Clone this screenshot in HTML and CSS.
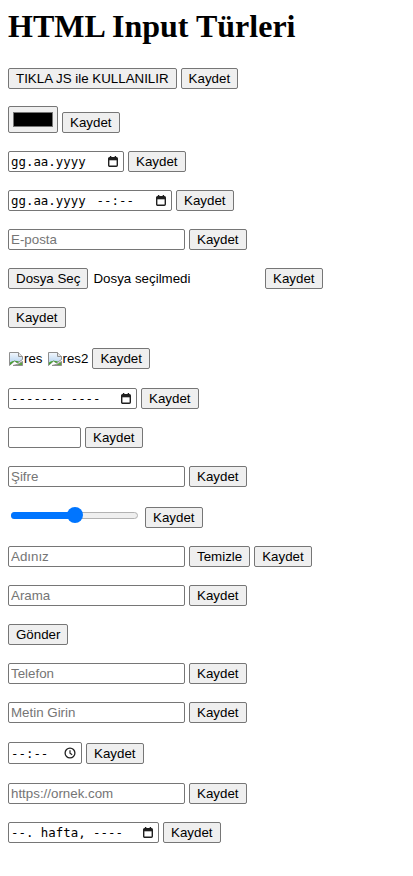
FILE: index.html
```html
<!DOCTYPE html>
<html lang="tr">
<head>
<meta charset="utf-8">
<title>HTML Input Türleri</title>
<link rel="stylesheet" href="styles.css">
</head>
<body class="page">
<h1 class="title">HTML Input Türleri</h1>
<form class="rows">
  <div class="row row-first">
    <button type="button" class="btn">TIKLA JS ile KULLANILIR</button>
    <button type="button" class="btn">Kaydet</button>
  </div>
  <div class="row row-color">
    <div class="color"><span class="swatch"></span></div>
    <button type="button" class="btn">Kaydet</button>
  </div>
  <div class="row">
    <div class="dt w-date"><span>gg.aa.yyyy</span>
      <svg class="cal" viewBox="0 0 10 11" width="10" height="11"><path d="M2.6 0v2.2M7.4 0v2.2" stroke="#202020" stroke-width="1.4"/><rect x="0.7" y="1.7" width="8.6" height="8.6" rx="1" fill="none" stroke="#202020" stroke-width="1.4"/><rect x="0.7" y="1.7" width="8.6" height="2.6" fill="#202020"/></svg>
    </div>
    <button type="button" class="btn">Kaydet</button>
  </div>
  <div class="row">
    <div class="dt w-datetime"><span>gg.aa.yyyy<span class="dt-time">--:--</span></span>
      <svg class="cal" viewBox="0 0 10 11" width="10" height="11"><path d="M2.6 0v2.2M7.4 0v2.2" stroke="#202020" stroke-width="1.4"/><rect x="0.7" y="1.7" width="8.6" height="8.6" rx="1" fill="none" stroke="#202020" stroke-width="1.4"/><rect x="0.7" y="1.7" width="8.6" height="2.6" fill="#202020"/></svg>
    </div>
    <button type="button" class="btn">Kaydet</button>
  </div>
  <div class="row">
    <input class="field" type="email" placeholder="E-posta">
    <button type="button" class="btn">Kaydet</button>
  </div>
  <div class="row">
    <div class="file"><button type="button" class="btn">Dosya Seç</button><span class="file-name">Dosya seçilmedi</span></div>
    <button type="button" class="btn">Kaydet</button>
  </div>
  <div class="row">
    <button type="button" class="btn">Kaydet</button>
  </div>
  <div class="row row-img">
    <span class="imgin">
      <svg class="broken" viewBox="0 0 16 16" width="16" height="16"><defs><linearGradient id="sky1" x1="0" y1="0" x2="0" y2="1"><stop offset="0" stop-color="#f4f8fd"/><stop offset="1" stop-color="#a8cbee"/></linearGradient></defs><path d="M1.5 1.5H10.5L14.5 5.5V8.5L9.5 12L6.5 10L1.5 14.5Z" fill="url(#sky1)" stroke="#8f8f8f" stroke-linejoin="round"/><path d="M2 13.9V11.6Q5.5 8.3 11 10.6L9.5 12L6.5 10Z" fill="#47a02f"/><path d="M14.5 10.5V14.5H5L9.6 13.4Z" fill="#5aa83c" stroke="#8f8f8f" stroke-linejoin="round"/><path d="M10.5 1.5V5.5H14.5" fill="#e6e6e6" stroke="#8f8f8f" stroke-linejoin="round"/></svg><span class="imgin-alt">res</span>
    </span>
    <span class="imgin">
      <svg class="broken" viewBox="0 0 16 16" width="16" height="16"><defs><linearGradient id="sky2" x1="0" y1="0" x2="0" y2="1"><stop offset="0" stop-color="#f4f8fd"/><stop offset="1" stop-color="#a8cbee"/></linearGradient></defs><path d="M1.5 1.5H10.5L14.5 5.5V8.5L9.5 12L6.5 10L1.5 14.5Z" fill="url(#sky2)" stroke="#8f8f8f" stroke-linejoin="round"/><path d="M2 13.9V11.6Q5.5 8.3 11 10.6L9.5 12L6.5 10Z" fill="#47a02f"/><path d="M14.5 10.5V14.5H5L9.6 13.4Z" fill="#5aa83c" stroke="#8f8f8f" stroke-linejoin="round"/><path d="M10.5 1.5V5.5H14.5" fill="#e6e6e6" stroke="#8f8f8f" stroke-linejoin="round"/></svg><span class="imgin-alt">res2</span>
    </span>
    <button type="button" class="btn">Kaydet</button>
  </div>
  <div class="row">
    <div class="dt w-month"><span>------- ----</span>
      <svg class="cal" viewBox="0 0 10 11" width="10" height="11"><path d="M2.6 0v2.2M7.4 0v2.2" stroke="#202020" stroke-width="1.4"/><rect x="0.7" y="1.7" width="8.6" height="8.6" rx="1" fill="none" stroke="#202020" stroke-width="1.4"/><rect x="0.7" y="1.7" width="8.6" height="2.6" fill="#202020"/></svg>
    </div>
    <button type="button" class="btn">Kaydet</button>
  </div>
  <div class="row">
    <input class="field w-number" type="text" inputmode="numeric">
    <button type="button" class="btn">Kaydet</button>
  </div>
  <div class="row">
    <input class="field" type="password" placeholder="Şifre">
    <button type="button" class="btn">Kaydet</button>
  </div>
  <div class="row row-range">
    <div class="range">
      <span class="range-track"></span>
      <span class="range-fill"></span>
      <span class="range-thumb"></span>
    </div>
    <button type="button" class="btn">Kaydet</button>
  </div>
  <div class="row">
    <input class="field" type="text" placeholder="Adınız">
    <button type="reset" class="btn">Temizle</button>
    <button type="button" class="btn">Kaydet</button>
  </div>
  <div class="row">
    <input class="field" type="search" placeholder="Arama">
    <button type="button" class="btn">Kaydet</button>
  </div>
  <div class="row">
    <button type="button" class="btn">Gönder</button>
  </div>
  <div class="row">
    <input class="field" type="tel" placeholder="Telefon">
    <button type="button" class="btn">Kaydet</button>
  </div>
  <div class="row">
    <input class="field" type="text" placeholder="Metin Girin">
    <button type="button" class="btn">Kaydet</button>
  </div>
  <div class="row row-time">
    <div class="dt dt-tall w-time"><span>--:--</span>
      <svg class="clock" viewBox="0 0 12 12" width="12" height="12"><circle cx="6" cy="6" r="4.9" fill="none" stroke="#202020" stroke-width="1.3"/><path d="M6 3.2V6.3L8.2 7.8" fill="none" stroke="#202020" stroke-width="1.2"/></svg>
    </div>
    <button type="button" class="btn">Kaydet</button>
  </div>
  <div class="row">
    <input class="field" type="url" placeholder="https://ornek.com">
    <button type="button" class="btn">Kaydet</button>
  </div>
  <div class="row">
    <div class="dt w-week"><span>--. hafta, ----</span>
      <svg class="cal" viewBox="0 0 10 11" width="10" height="11"><path d="M2.6 0v2.2M7.4 0v2.2" stroke="#202020" stroke-width="1.4"/><rect x="0.7" y="1.7" width="8.6" height="8.6" rx="1" fill="none" stroke="#202020" stroke-width="1.4"/><rect x="0.7" y="1.7" width="8.6" height="2.6" fill="#202020"/></svg>
    </div>
    <button type="button" class="btn">Kaydet</button>
  </div>
</form>
</body>
</html>
```

FILE: styles.css
```css
* {
  box-sizing: border-box;
}

.page {
  margin: 0;
  padding: 8px;
  background: #fff;
  color: #000;
  font-family: "Liberation Serif", "Times New Roman", serif;
}

.title {
  margin: 0 0 23px;
  font-size: 32px;
  line-height: 37px;
  font-weight: bold;
}

.rows {
  display: flex;
  flex-direction: column;
  gap: 18px;
  margin: 0;
}

.row {
  display: flex;
  align-items: flex-start;
  gap: 4px;
  height: 21px;
}

.row-first {
  height: 20px;
}

.row-color {
  height: 27px;
  align-items: flex-end;
}

.row-img {
  height: 24px;
  align-items: center;
}

.row-range {
  height: 23px;
  align-items: flex-end;
}

.row-time {
  height: 24px;
  align-items: center;
}

.btn {
  flex: none;
  height: 21px;
  margin: 0;
  padding: 0 7px;
  border: 1px solid #767676;
  border-radius: 2px;
  background: #efefef;
  color: #000;
  font: 13.333px/19px "Liberation Sans", Arial, sans-serif;
  white-space: nowrap;
}

.field {
  flex: none;
  width: 177px;
  height: 21px;
  margin: 0;
  padding: 0 2px;
  border: 1px solid #767676;
  border-radius: 2px;
  background: #fff;
  color: #000;
  font: 13.333px/19px "Liberation Sans", Arial, sans-serif;
  outline: none;
}

.field::placeholder {
  color: #757575;
  opacity: 1;
}

.w-number {
  width: 73px;
}

.color {
  flex: none;
  display: flex;
  width: 50px;
  height: 27px;
  padding: 5px 4px;
  border: 1px solid #767676;
  border-radius: 2px;
  background: #efefef;
}

.swatch {
  flex: 1;
  background: #000;
  border: 1px solid #777;
}

.dt {
  flex: none;
  display: flex;
  align-items: center;
  justify-content: space-between;
  height: 21px;
  padding: 0 5px 0 2px;
  border: 1px solid #767676;
  border-radius: 2px;
  background: #fff;
  color: #000;
  font: 12.4px/19px "DejaVu Sans Mono", "Liberation Mono", monospace;
  white-space: pre;
}

.dt-tall {
  height: 22px;
  padding-right: 5px;
}

.dt-time {
  margin-left: 11px;
}

.w-date {
  width: 116px;
}

.w-datetime {
  width: 164px;
}

.w-month {
  width: 129px;
}

.w-time {
  width: 74px;
}

.w-week {
  width: 151px;
}

.cal {
  display: block;
  flex: none;
}

.clock {
  display: block;
  flex: none;
}

.file {
  flex: none;
  display: flex;
  align-items: center;
  gap: 5px;
  width: 253px;
  font: 13.333px/21px "Liberation Sans", Arial, sans-serif;
}

.imgin {
  flex: none;
  display: flex;
  align-items: flex-end;
  height: 21px;
  font: 13.333px/21px "Liberation Sans", Arial, sans-serif;
}

.broken {
  display: block;
  flex: none;
  margin-bottom: 2px;
}

.range {
  position: relative;
  flex: none;
  align-self: flex-start;
  width: 129px;
  height: 16px;
  margin: 2px 2px 0;
}

.range-track {
  position: absolute;
  left: 1px;
  right: 1px;
  top: 4.5px;
  height: 7px;
  border: 1px solid #b2b2b2;
  border-radius: 4px;
  background: #efefef;
}

.range-fill {
  position: absolute;
  left: 1px;
  width: 66px;
  top: 4.5px;
  height: 7px;
  border-radius: 4px 0 0 4px;
  background: #0075ff;
}

.range-thumb {
  position: absolute;
  left: 57px;
  top: 0;
  width: 16px;
  height: 16px;
  border-radius: 50%;
  background: #0075ff;
}
```
